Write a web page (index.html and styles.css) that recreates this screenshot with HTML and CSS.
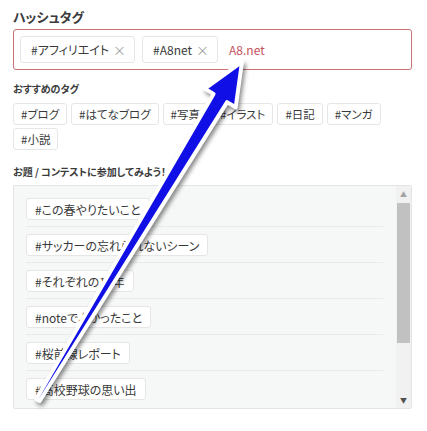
FILE: index.html
```html
<!DOCTYPE html>
<html lang="ja">
<head>
    <meta charset="UTF-8">
    <meta name="viewport" content="width=device-width, initial-scale=1.0">
    <title>ハッシュタグ</title>
    <link rel="stylesheet" href="styles.css">
</head>
<body>
<div class="page">
    <h2 class="field-label">ハッシュタグ</h2>

    <div class="tag-input">
        <span class="tag">#アフィリエイト <span class="tag-remove">×</span></span>
        <span class="tag">#A8net <span class="tag-remove">×</span></span>
        <span class="tag-typing">A8.net</span>
    </div>

    <h3 class="sub-label">おすすめのタグ</h3>
    <div class="suggest-list">
        <span class="chip">#ブログ</span>
        <span class="chip">#はてなブログ</span>
        <span class="chip">#写真</span>
        <span class="chip">#イラスト</span>
        <span class="chip">#日記</span>
        <span class="chip">#マンガ</span>
        <span class="chip">#小説</span>
    </div>

    <h3 class="sub-label contest-label">お題 / コンテストに参加してみよう！</h3>
    <div class="contest-box">
        <ul class="contest-list">
            <li class="contest-item"><span class="chip">#この春やりたいこと</span></li>
            <li class="contest-item"><span class="chip">#サッカーの忘れられないシーン</span></li>
            <li class="contest-item"><span class="chip">#それぞれの10年</span></li>
            <li class="contest-item"><span class="chip">#noteでよかったこと</span></li>
            <li class="contest-item"><span class="chip">#桜前線レポート</span></li>
            <li class="contest-item"><span class="chip">#高校野球の思い出</span></li>
        </ul>
        <div class="scrollbar">
            <div class="scroll-btn">&#9650;</div>
            <div class="scroll-track"><div class="scroll-thumb"></div></div>
            <div class="scroll-btn">&#9660;</div>
        </div>
    </div>

    <!-- annotation arrow -->
    <svg class="arrow" width="427" height="431" viewBox="0 0 427 431">
        <polygon points="36.3,399 213.5,93.9 204.9,88.7 242,62 235.7,107.3 227.1,102.1 39.7,401"
                 fill="#1010e6" stroke="#ffffff" stroke-width="4" stroke-linejoin="round"/>
    </svg>
</div>
</body>
</html>
```

FILE: styles.css
```css
* {
    margin: 0;
    padding: 0;
    box-sizing: border-box;
}

body {
    background-color: #ffffff;
    color: #3a3a3a;
    font-family: "Noto Sans CJK JP", "Noto Sans", sans-serif;
    font-feature-settings: "palt";
}

.page {
    position: relative;
    width: 427px;
    height: 431px;
    padding: 8px 15px 0 13px;
    overflow: hidden;
}

.field-label {
    font-size: 13px;
    line-height: 18px;
    font-weight: bold;
    margin-bottom: 3px;
}

.tag-input {
    display: flex;
    align-items: center;
    gap: 7px;
    height: 41px;
    padding: 6px;
    border: 1px solid #c97275;
    border-radius: 3px;
}

.tag {
    display: flex;
    align-items: center;
    height: 27px;
    padding: 0 8px 0 10px;
    border: 1px solid #e6e6e6;
    border-radius: 3px;
    font-size: 12px;
    gap: 4px;
}

.tag-remove {
    color: #a0a0a0;
    font-size: 13px;
}

.tag-typing {
    color: #c4515c;
    font-size: 12px;
    padding-left: 4px;
}

.sub-label {
    font-size: 10px;
    line-height: 14px;
    font-weight: bold;
    margin-top: 12px;
    margin-bottom: 7px;
}

.contest-label {
    margin-top: 15px;
    margin-bottom: 6px;
}

.suggest-list {
    display: flex;
    flex-wrap: wrap;
    gap: 3px 4px;
}

.chip {
    display: inline-flex;
    align-items: center;
    height: 22px;
    padding: 0 8px;
    background-color: #ffffff;
    border: 1px solid #e6e6e6;
    border-radius: 3px;
    font-size: 12px;
    white-space: nowrap;
}

.suggest-list .chip {
    font-size: 11.5px;
    padding: 0 7px;
}

.contest-box {
    display: flex;
    height: 224px;
    background-color: #f6f7f7;
    border: 1px solid #e4e4e4;
    border-radius: 2px;
}

.contest-list {
    flex: 1;
    list-style: none;
    padding: 5px 13px 0 12px;
    overflow: hidden;
}

.contest-item {
    display: flex;
    padding: 7px 0 6px;
    border-bottom: 1px solid #e9eaea;
}

.contest-item:last-child {
    border-bottom: none;
}

.scrollbar {
    display: flex;
    flex-direction: column;
    width: 15px;
    background-color: #f1f1f1;
}

.scroll-btn {
    height: 16px;
    font-size: 7px;
    line-height: 16px;
    text-align: center;
    color: #a3a3a3;
}

.scroll-btn:last-child {
    color: #505050;
}

.scroll-track {
    flex: 1;
    padding: 1px 1px 0 1px;
}

.scroll-thumb {
    height: 140px;
    background-color: #c1c1c1;
}

.arrow {
    position: absolute;
    top: 0;
    left: 0;
    pointer-events: none;
    filter: drop-shadow(2px 3px 2px rgba(0, 0, 0, 0.45));
}
```
